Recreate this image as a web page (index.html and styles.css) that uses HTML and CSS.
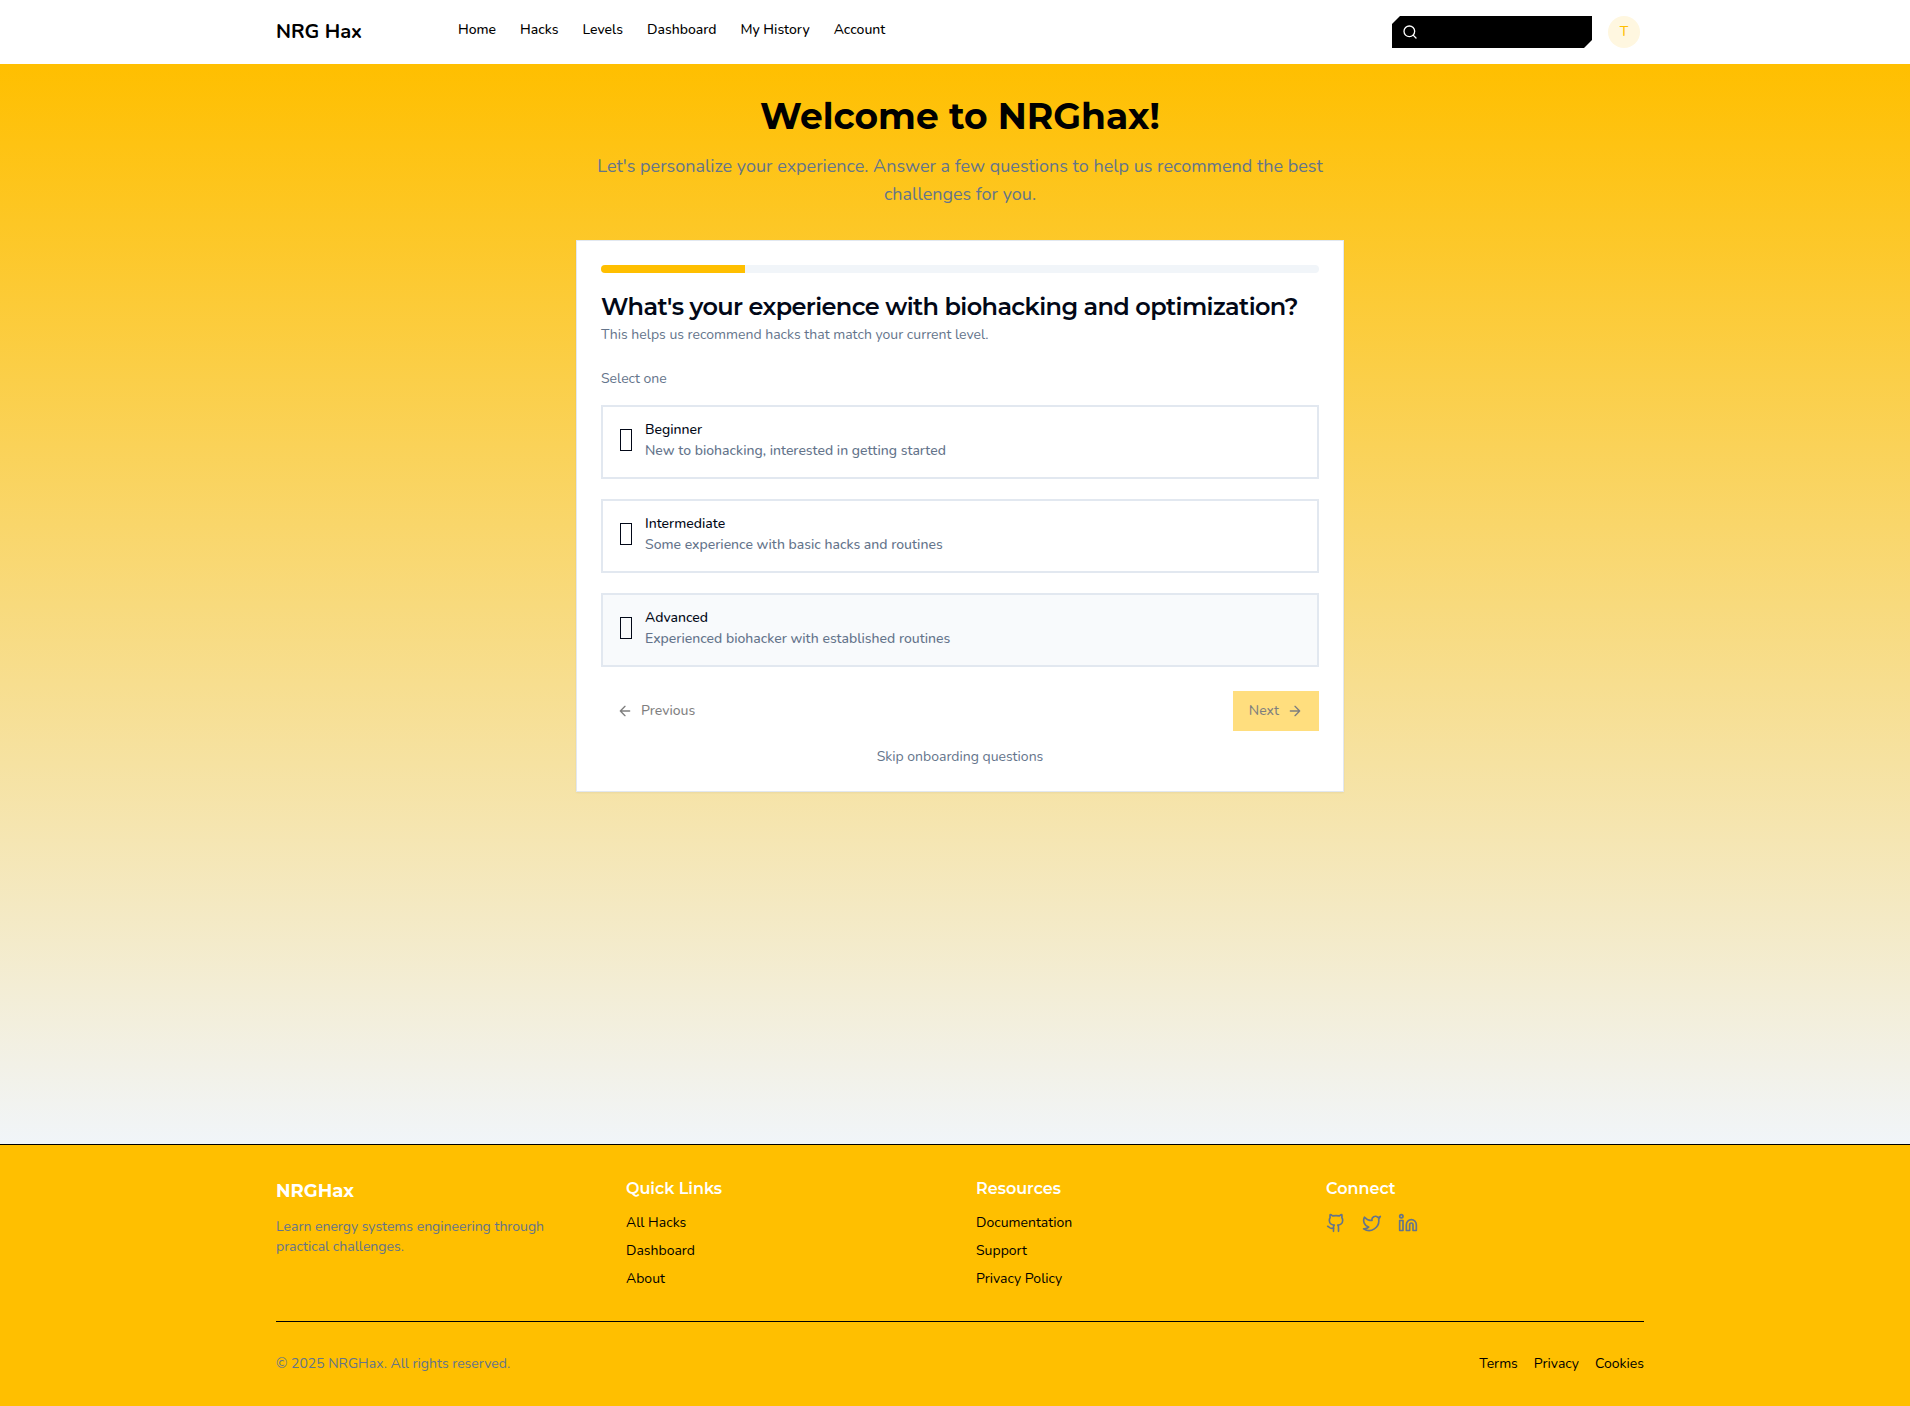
FILE: index.html
```html
<!DOCTYPE html>
<html lang="en">
<head>
<meta charset="utf-8">
<meta name="viewport" content="width=device-width, initial-scale=1">
<title>NRG Hax</title>
<link rel="stylesheet" href="styles.css">
</head>
<body>
<header class="site-header">
  <div class="container header-row">
    <a class="brand" href="#">NRG Hax</a>
    <nav class="main-nav" aria-label="Main">
      <a href="#">Home</a>
      <a href="#">Hacks</a>
      <a href="#">Levels</a>
      <a href="#">Dashboard</a>
      <a href="#">My History</a>
      <a href="#">Account</a>
    </nav>
    <label class="search">
      <svg class="icon-16" viewBox="0 0 24 24" aria-hidden="true"><circle cx="11" cy="11" r="8"/><path d="m21 21-4.300-4.300"/></svg>
      <input type="search" aria-label="Search">
    </label>
    <button class="avatar" type="button">T</button>
  </div>
</header>

<main class="page">
  <div class="onboarding">
    <h1 class="welcome">Welcome to NRGhax!</h1>
    <p class="intro">Let's personalize your experience. Answer a few questions to help us recommend the best challenges for you.</p>
    <section class="card">
      <div class="progress" role="progressbar" aria-label="Progress" aria-valuenow="20" aria-valuemin="0" aria-valuemax="100"><div class="progress-fill" style="width: 20%"></div></div>
      <h2 class="question">What's your experience with biohacking and optimization?</h2>
      <p class="hint">This helps us recommend hacks that match your current level.</p>
      <p class="select-note">Select one</p>
      <div class="options">
        <button class="option" type="button">
          <span class="option-icon"></span>
          <span class="option-text"><span class="option-title">Beginner</span><span class="option-desc">New to biohacking, interested in getting started</span></span>
        </button>
        <button class="option" type="button">
          <span class="option-icon"></span>
          <span class="option-text"><span class="option-title">Intermediate</span><span class="option-desc">Some experience with basic hacks and routines</span></span>
        </button>
        <button class="option option-active" type="button">
          <span class="option-icon"></span>
          <span class="option-text"><span class="option-title">Advanced</span><span class="option-desc">Experienced biohacker with established routines</span></span>
        </button>
      </div>
      <div class="actions">
        <button class="btn" type="button" disabled><svg class="icon-16" viewBox="0 0 24 24" aria-hidden="true"><path d="m12 19-7-7 7-7M19 12H5"/></svg>Previous</button>
        <button class="btn btn-next" type="button" disabled>Next<svg class="icon-16" viewBox="0 0 24 24" aria-hidden="true"><path d="M5 12h14M12 5l7 7-7 7"/></svg></button>
      </div>
      <button class="skip" type="button">Skip onboarding questions</button>
    </section>
  </div>
</main>

<footer class="site-footer">
  <div class="container">
    <div class="footer-grid">
      <div>
        <h3 class="footer-brand">NRGHax</h3>
        <p class="footer-about">Learn energy systems engineering through practical challenges.</p>
      </div>
      <div>
        <h4 class="footer-title">Quick Links</h4>
        <ul class="footer-list">
          <li><a href="#">All Hacks</a></li>
          <li><a href="#">Dashboard</a></li>
          <li><a href="#">About</a></li>
        </ul>
      </div>
      <div>
        <h4 class="footer-title">Resources</h4>
        <ul class="footer-list">
          <li><a href="#">Documentation</a></li>
          <li><a href="#">Support</a></li>
          <li><a href="#">Privacy Policy</a></li>
        </ul>
      </div>
      <div>
        <h4 class="footer-title">Connect</h4>
        <div class="social">
          <a href="#" aria-label="GitHub"><svg class="icon-20" viewBox="0 0 24 24" aria-hidden="true"><path d="M15 22v-4a4.800 4.800 0 0 0-1-3.500c3 0 6-2 6-5.500.080-1.250-.270-2.480-1-3.500.280-1.150.280-2.350 0-3.500 0 0-1 0-3 1.500-2.640-.500-5.360-.500-8 0C6 2 5 2 5 2c-.300 1.150-.300 2.350 0 3.500A5.403 5.403 0 0 0 4 9c0 3.500 3 5.500 6 5.500-.390.490-.680 1.050-.850 1.650-.170.600-.220 1.230-.150 1.850v4"/><path d="M9 18c-4.510 2-5-2-7-2"/></svg></a>
          <a href="#" aria-label="Twitter"><svg class="icon-20" viewBox="0 0 24 24" aria-hidden="true"><path d="M22 4s-.700 2.100-2 3.400c1.600 10-9.400 17.300-18 11.600 2.200.100 4.400-.600 6-2C3 15.500.500 9.600 3 5c2.200 2.600 5.600 4.100 9 4-.900-4.200 4-6.600 7-3.800 1.100 0 3-1.200 3-1.200z"/></svg></a>
          <a href="#" aria-label="LinkedIn"><svg class="icon-20" viewBox="0 0 24 24" aria-hidden="true"><path d="M16 8a6 6 0 0 1 6 6v7h-4v-7a2 2 0 0 0-4 0v7h-4v-7a6 6 0 0 1 6-6z"/><rect x="2" y="9" width="4" height="12"/><circle cx="4" cy="4" r="2"/></svg></a>
        </div>
      </div>
    </div>
    <div class="footer-bottom">
      <p>© 2025 NRGHax. All rights reserved.</p>
      <nav class="legal" aria-label="Legal"><a href="#">Terms</a><a href="#">Privacy</a><a href="#">Cookies</a></nav>
    </div>
  </div>
</footer>
</body>
</html>
```
FILE: styles.css
```css
* { box-sizing: border-box; }

body {
  --amber: #ffbf00;
  --muted: #64748b;
  --line: #e2e8f0;
  --display: Montserrat, "Noto Sans", sans-serif;
  margin: 0;
  min-height: 100vh;
  display: flex;
  flex-direction: column;
  font: 14px/20px Nunito, "Open Sans", sans-serif;
  color: #000;
}

h1, h2, h3, h4, p, ul { margin: 0; padding: 0; }
a { color: inherit; text-decoration: none; }
button, input { font: inherit; color: inherit; border: 0; background: none; padding: 0; }

svg { fill: none; stroke: currentColor; stroke-width: 2; stroke-linecap: round; stroke-linejoin: round; flex: none; display: block; }
.icon-16 { width: 16px; height: 16px; }
.icon-20 { width: 20px; height: 20px; }

/* The bands keep a 10px gutter on the left */
.site-header, .page, .site-footer { padding-left: 10px; }

.container { max-width: 1400px; margin: 0 auto; padding: 0 16px; }

/* Header */
.site-header { background: #fff; }
.header-row { display: flex; align-items: center; height: 64px; padding-right: 20px; }
.brand { width: 182px; font-size: 20px; line-height: 28px; font-weight: 700; }
.main-nav { display: flex; flex: 1; gap: 24px; padding-bottom: 4px; font-weight: 500; }
.search {
  display: flex;
  align-items: center;
  width: 200px;
  height: 32px;
  margin-right: 16px;
  padding: 0 10px;
  gap: 8px;
  background: #000;
  color: #fff;
  clip-path: polygon(8px 0, 100% 0, 100% calc(100% - 8px), calc(100% - 8px) 100%, 0 100%, 0 8px);
}
.search input { flex: 1; min-width: 0; outline: 0; }
.avatar { width: 32px; height: 32px; border-radius: 50%; background: #fff7e0; color: var(--amber); font-weight: 500; }

/* Onboarding */
.page { flex: 1; padding-top: 32px; padding-bottom: 32px; background: linear-gradient(to bottom, var(--amber), #f1f5f9); }
.onboarding { max-width: 768px; margin: 0 auto; }
.welcome { margin-bottom: 16px; font: 700 36px/40px var(--display); text-align: center; }
.intro { margin-bottom: 32px; font-size: 18px; line-height: 28px; color: var(--muted); text-align: center; }
.card {
  display: flex;
  flex-direction: column;
  padding: 24px;
  border: 1px solid var(--line);
  background: #fff;
  color: #020817;
  box-shadow: 0 1px 2px rgb(0 0 0 / 5%);
}
.progress { height: 8px; border-radius: 4px; overflow: hidden; background: #f1f5f9; }
.progress-fill { height: 100%; background: var(--amber); }
.question { margin-top: 20px; font: 600 24px/28px var(--display); letter-spacing: -0.025em; }
.hint { margin-top: 4px; color: var(--muted); }
.select-note { margin-top: 24px; color: var(--muted); }
.options { display: grid; gap: 20px; margin-top: 16px; }
.option {
  display: flex;
  align-items: center;
  gap: 12px;
  padding: 12px 16px 16px;
  border: 2px solid var(--line);
  text-align: left;
  line-height: 21px;
  font-weight: 500;
}
.option-active { background: #f8fafc; }
.option-icon { width: 12px; height: 22px; margin: 0 1px; border: 1px solid #020817; }
.option-text { display: grid; }
.option-desc { color: var(--muted); }
.actions { display: flex; justify-content: space-between; margin-top: 24px; }
.btn { display: flex; align-items: center; gap: 8px; height: 40px; padding: 0 16px; font-weight: 500; color: #000; opacity: .5; }
.btn-next { background: var(--amber); }
.skip { align-self: center; margin-top: 16px; color: var(--muted); }

/* Footer */
.site-footer { border-top: 1px solid #000; background: var(--amber); }
.site-footer .container { padding-top: 32px; padding-bottom: 32px; }
.footer-grid { display: grid; grid-template-columns: repeat(4, 1fr); gap: 32px; margin-bottom: 32px; }
.footer-brand { margin-bottom: 12px; font: 700 18px/28px var(--display); color: #fff; }
.footer-about { color: var(--muted); }
.footer-title { margin-bottom: 12px; font: 600 16px/24px var(--display); color: #fff; }
.footer-list { display: grid; gap: 8px; list-style: none; }
.social { display: flex; gap: 16px; color: var(--muted); }
.footer-bottom { display: flex; justify-content: space-between; padding-top: 32px; border-top: 1px solid #000; color: var(--muted); }
.legal { display: flex; gap: 16px; color: #000; }
```
